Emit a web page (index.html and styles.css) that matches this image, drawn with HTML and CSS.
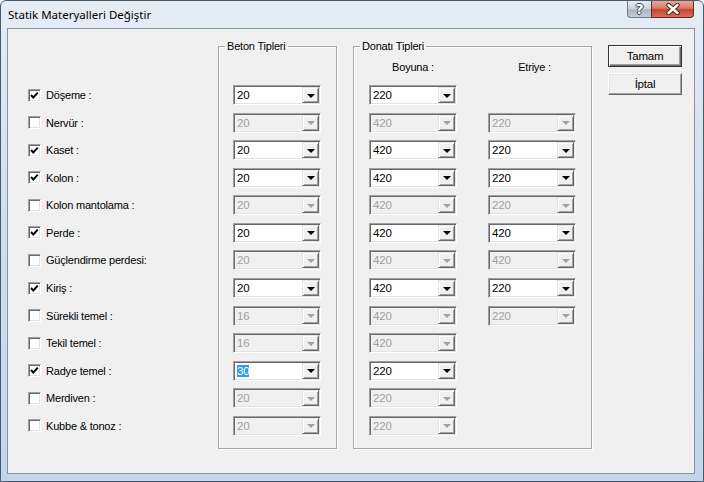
FILE: index.html
```html
<!DOCTYPE html>
<html lang="tr">
<head>
    <meta charset="UTF-8">
    <title>Statik Materyalleri Değiştir</title>
    <link rel="stylesheet" href="styles.css">
</head>
<body>
    <div class="window">
        <div class="titlebar">
            <span class="title">Statik Materyalleri Değiştir</span>
            <div class="caption">
                <span class="cap-btn help">?</span>
                <span class="cap-btn close">
                    <svg width="16" height="12" viewBox="0 0 16 12">
                        <path d="M3.5 2 L12.5 10 M12.5 2 L3.5 10" stroke="#4a2a22" stroke-width="4.4" stroke-linecap="round"/>
                        <path d="M3.5 2 L12.5 10 M12.5 2 L3.5 10" stroke="#fff" stroke-width="2.4" stroke-linecap="round"/>
                    </svg>
                </span>
            </div>
        </div>

        <div class="client">
            <!-- eleman listesi -->
            <div class="labels">
                <label class="check on"><span class="box"></span>Döşeme :</label>
                <label class="check"><span class="box"></span>Nervür :</label>
                <label class="check on"><span class="box"></span>Kaset :</label>
                <label class="check on"><span class="box"></span>Kolon :</label>
                <label class="check"><span class="box"></span>Kolon mantolama :</label>
                <label class="check on"><span class="box"></span>Perde :</label>
                <label class="check"><span class="box"></span>Güçlendirme perdesi:</label>
                <label class="check on"><span class="box"></span>Kiriş :</label>
                <label class="check"><span class="box"></span>Sürekli temel :</label>
                <label class="check"><span class="box"></span>Tekil temel :</label>
                <label class="check on"><span class="box"></span>Radye temel :</label>
                <label class="check"><span class="box"></span>Merdiven :</label>
                <label class="check"><span class="box"></span>Kubbe &amp; tonoz :</label>
            </div>

            <!-- beton -->
            <fieldset class="group beton">
                <legend>Beton Tipleri</legend>
                <div class="stack">
                    <div class="combo"><span class="val">20</span><span class="drop"></span></div>
                    <div class="combo off"><span class="val">20</span><span class="drop"></span></div>
                    <div class="combo"><span class="val">20</span><span class="drop"></span></div>
                    <div class="combo"><span class="val">20</span><span class="drop"></span></div>
                    <div class="combo off"><span class="val">20</span><span class="drop"></span></div>
                    <div class="combo"><span class="val">20</span><span class="drop"></span></div>
                    <div class="combo off"><span class="val">20</span><span class="drop"></span></div>
                    <div class="combo"><span class="val">20</span><span class="drop"></span></div>
                    <div class="combo off"><span class="val">16</span><span class="drop"></span></div>
                    <div class="combo off"><span class="val">16</span><span class="drop"></span></div>
                    <div class="combo"><span class="val"><span class="sel">30</span></span><span class="drop"></span></div>
                    <div class="combo off"><span class="val">20</span><span class="drop"></span></div>
                    <div class="combo off"><span class="val">20</span><span class="drop"></span></div>
                </div>
            </fieldset>

            <!-- donatı -->
            <fieldset class="group donati">
                <legend>Donatı Tipleri</legend>
                <div class="heads">
                    <span>Boyuna :</span>
                    <span class="etriye">Etriye :</span>
                </div>
                <div class="grid2">
                    <div class="combo"><span class="val">220</span><span class="drop"></span></div>
                    <span></span>
                    <div class="combo off"><span class="val">420</span><span class="drop"></span></div>
                    <div class="combo off"><span class="val">220</span><span class="drop"></span></div>
                    <div class="combo"><span class="val">420</span><span class="drop"></span></div>
                    <div class="combo"><span class="val">220</span><span class="drop"></span></div>
                    <div class="combo"><span class="val">420</span><span class="drop"></span></div>
                    <div class="combo"><span class="val">220</span><span class="drop"></span></div>
                    <div class="combo off"><span class="val">420</span><span class="drop"></span></div>
                    <div class="combo off"><span class="val">220</span><span class="drop"></span></div>
                    <div class="combo"><span class="val">420</span><span class="drop"></span></div>
                    <div class="combo"><span class="val">420</span><span class="drop"></span></div>
                    <div class="combo off"><span class="val">420</span><span class="drop"></span></div>
                    <div class="combo off"><span class="val">420</span><span class="drop"></span></div>
                    <div class="combo"><span class="val">420</span><span class="drop"></span></div>
                    <div class="combo"><span class="val">220</span><span class="drop"></span></div>
                    <div class="combo off"><span class="val">420</span><span class="drop"></span></div>
                    <div class="combo off"><span class="val">220</span><span class="drop"></span></div>
                    <div class="combo off"><span class="val">420</span><span class="drop"></span></div>
                    <span></span>
                    <div class="combo"><span class="val">220</span><span class="drop"></span></div>
                    <span></span>
                    <div class="combo off"><span class="val">220</span><span class="drop"></span></div>
                    <span></span>
                    <div class="combo off"><span class="val">220</span><span class="drop"></span></div>
                    <span></span>
                </div>
            </fieldset>

            <div class="buttons">
                <button class="btn default">Tamam</button>
                <button class="btn">İptal</button>
            </div>
        </div>
    </div>
</body>
</html>
```

FILE: styles.css
```css
* {
    margin: 0;
    padding: 0;
    box-sizing: border-box;
}

body {
    width: 704px;
    height: 482px;
    overflow: hidden;
    background: #fff;
    font-family: "Liberation Sans", Arial, sans-serif;
    font-size: 11px;
    letter-spacing: -0.2px;
    color: #000;
}

.window {
    height: 482px;
    display: flex;
    flex-direction: column;
    background: linear-gradient(#e6edf5 0%, #d6e2ef 30%, #c2d5ea 100%);
    border: 1px solid #4b5a6b;
    border-radius: 6px 6px 0 0;
}

.titlebar {
    height: 27px;
    display: flex;
    justify-content: space-between;
    align-items: flex-start;
}

.title {
    font-family: "Noto Sans", sans-serif;
    font-size: 11.5px;
    letter-spacing: 0;
    padding: 6px 0 0 7px;
}

.caption {
    display: flex;
    margin-right: 9px;
}

.cap-btn {
    height: 17px;
    display: flex;
    align-items: center;
    justify-content: center;
    border: 1px solid #6d7a88;
    border-top: none;
}

.help {
    width: 24px;
    border-radius: 0 0 0 4px;
    border-right: none;
    background: linear-gradient(#e6ebf1 0%, #c9d2dc 50%, #aab6c3 55%, #c3ccd6 100%);
    color: #fff;
    font-family: "DejaVu Sans", sans-serif;
    font-weight: bold;
    font-size: 14px;
    text-shadow: 1px 0 #3c4652, -1px 0 #3c4652, 0 1px #3c4652, 0 -1px #3c4652;
}

.close {
    width: 43px;
    border-radius: 0 0 4px 0;
    border-color: #6b2a20;
    background: linear-gradient(#e9a99b 0%, #d77a68 45%, #c5432f 55%, #d8705a 100%);
}

.client {
    flex: 1;
    margin: 0 8px 7px 6px;
    background: #f0f0f0;
    border: 1px solid #8393a4;
    display: flex;
    align-items: flex-start;
    padding: 11px 0 0 20px;
}

/* sol sütun */
.labels {
    width: 190px;
    padding-top: 45px;
    display: flex;
    flex-direction: column;
    gap: 7.58px;
}

.check {
    height: 20px;
    display: flex;
    align-items: center;
}

.box {
    width: 13px;
    height: 13px;
    margin-right: 5px;
    background: #fff;
    border: 1px solid;
    border-color: #a0a0a0 #fff #fff #a0a0a0;
    box-shadow: inset 1px 1px 0 #696969, inset -1px -1px 0 #e3e3e3;
}

.check.on .box {
    background: #fff url("data:image/svg+xml;utf8,<svg xmlns='http://www.w3.org/2000/svg' width='11' height='11'><path d='M2 5 L4.3 7.5 L8.8 2.6' fill='none' stroke='black' stroke-width='1.9'/></svg>") no-repeat center;
}

/* gruplar */
.group {
    height: 409px;
    border: 1px solid #a7a7a7;
    box-shadow: 1px 1px 0 #fff, inset 1px 1px 0 #fff;
    padding: 33px 0 0 6px;
}

.group legend {
    padding: 0 2px;
    line-height: 12px;
}

.beton {
    width: 119px;
}

.beton .stack {
    margin-left: 8px;
    display: flex;
    flex-direction: column;
    gap: 7.58px;
}

.donati {
    width: 239px;
    margin-left: 16px;
    padding-top: 8px;
}

.heads {
    height: 25px;
    margin-left: 9px;
    display: grid;
    grid-template-columns: 88px 88px;
    column-gap: 31px;
    line-height: 14px;
    text-align: center;
}

.heads .etriye {
    padding-left: 5px;
}

.grid2 {
    margin-left: 9px;
    display: grid;
    grid-template-columns: 88px 88px;
    column-gap: 31px;
    row-gap: 7.58px;
    grid-auto-rows: 20px;
}

/* açılır kutu */
.combo {
    width: 88px;
    height: 20px;
    display: flex;
    align-items: center;
    padding: 1px;
    background: #fff;
    border: 1px solid;
    border-color: #a0a0a0 #fff #fff #a0a0a0;
    box-shadow: inset 1px 1px 0 #696969, inset -1px -1px 0 #e3e3e3;
}

.val {
    flex: 1;
    padding-left: 2px;
    line-height: 16px;
    font-size: 11.5px;
}

.sel {
    background: #3399ff;
    color: #fff;
}

.drop {
    width: 17px;
    height: 16px;
    display: flex;
    align-items: center;
    justify-content: center;
    background: #f0f0f0;
    border: 1px solid;
    border-color: #e3e3e3 #696969 #696969 #e3e3e3;
    box-shadow: inset 1px 1px 0 #fff, inset -1px -1px 0 #a0a0a0;
}

.drop::after {
    content: "";
    border-left: 4px solid transparent;
    border-right: 4px solid transparent;
    border-top: 4px solid #000;
    margin-top: 1px;
}

.combo.off {
    background: #f0f0f0;
    color: #a0a0a0;
}

.combo.off .drop::after {
    border-top-color: #a0a0a0;
}

/* düğmeler */
.buttons {
    margin: 5px 0 0 16px;
    display: flex;
    flex-direction: column;
    gap: 6px;
}

.btn {
    width: 74px;
    height: 22px;
    background: #f0f0f0;
    font-family: "Liberation Sans", Arial, sans-serif;
    font-size: 11.5px;
    letter-spacing: -0.2px;
    color: #000;
    border: 1px solid;
    border-color: #fff #696969 #696969 #fff;
    box-shadow: inset -1px -1px 0 #a0a0a0, inset 1px 1px 0 #e3e3e3;
}

.btn.default {
    border: 1px solid #333;
    box-shadow: inset 1px 1px 0 #fff, inset -1px -1px 0 #696969, inset -2px -2px 0 #a0a0a0;
}
```
